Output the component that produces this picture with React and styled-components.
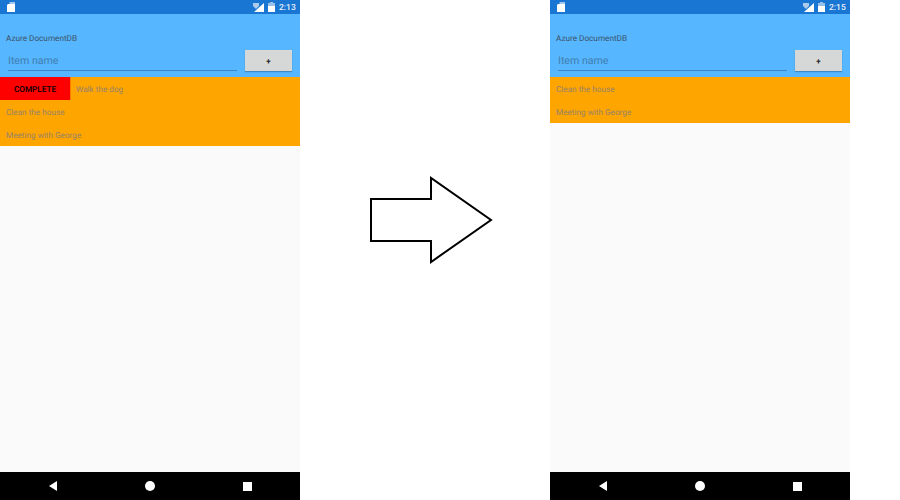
import React from 'react';
import styled, { createGlobalStyle } from 'styled-components';

const GlobalStyle = createGlobalStyle`
  html, body {
    margin: 0;
    padding: 0;
    background: #ffffff;
    font-family: Roboto, "Liberation Sans", sans-serif;
    text-rendering: geometricPrecision;
  }
`;

const Phone = ({ time, items, swiped }) => (
  <PhoneFrame>
    <StatusBar>
      <svg width="8" height="10" viewBox="0 0 8 10">
        <path d="M2.5 0H8V2H2.5Z" fill="#fff" opacity="0.6" />
        <path d="M1 2H8V10H0V3Z" fill="#fff" />
      </svg>
      <StatusRight>
        <svg width="11" height="9" viewBox="0 0 11 9">
          <path d="M11 0V9H1Z" fill="#fff" />
          <path d="M0 0H6V3L3 6L0 3Z" fill="#cfe0f3" opacity="0.8" />
        </svg>
        <svg width="7" height="10" viewBox="0 0 7 10">
          <path d="M2 0H5V1H7V10H0V1H2Z" fill="#fff" opacity="0.55" />
          <path d="M0 4H7V10H0Z" fill="#fff" />
        </svg>
        <Clock>{time}</Clock>
      </StatusRight>
    </StatusBar>
    <Header>
      <AppTitle>Azure DocumentDB</AppTitle>
      <InputRow>
        <ItemInput>Item name</ItemInput>
        <AddButton>+</AddButton>
      </InputRow>
    </Header>
    <TodoList>
      {swiped && (
        <TodoRow>
          <CompleteButton>COMPLETE</CompleteButton>
          <TodoText $afterButton>{swiped}</TodoText>
        </TodoRow>
      )}
      {items.map((item) => (
        <TodoRow key={item}>
          <TodoText>{item}</TodoText>
        </TodoRow>
      ))}
    </TodoList>
    <Body />
    <NavBar>
      <svg width="8" height="10" viewBox="0 0 8 10">
        <path d="M8 0V10L0 5Z" fill="#fff" />
      </svg>
      <HomeDot />
      <RecentSquare />
    </NavBar>
  </PhoneFrame>
);

const App = () => (
  <>
    <GlobalStyle />
    <Page>
      <Phone time="2:13" swiped="Walk the dog" items={['Clean the house', 'Meeting with George']} />
      <ArrowColumn>
        <svg width="124" height="88" viewBox="0 0 124 88">
          <path
            d="M2 23H62V2L122 44L62 86V65H2Z"
            fill="#fff"
            stroke="#000"
            strokeWidth="2"
          />
        </svg>
      </ArrowColumn>
      <Phone time="2:15" items={['Clean the house', 'Meeting with George']} />
    </Page>
  </>
);

export default App;

const Page = styled.div`
  display: flex;
  width: 900px;
  height: 500px;
  overflow: hidden;
  background: #ffffff;
`;

const PhoneFrame = styled.div`
  display: flex;
  flex-direction: column;
  width: 300px;
  height: 500px;
  flex-shrink: 0;
  background: #fafafa;
`;

const ArrowColumn = styled.div`
  display: flex;
  justify-content: center;
  width: 250px;
  flex-shrink: 0;
  padding: 176px 0 0 11px;
  box-sizing: border-box;
`;

const StatusBar = styled.div`
  display: flex;
  justify-content: space-between;
  align-items: center;
  height: 14px;
  padding: 0 5px 0 7px;
  background: #1976d2;
`;

const StatusRight = styled.div`
  display: flex;
  align-items: center;
  gap: 4px;
`;

const Clock = styled.span`
  width: 16px;
  padding-top: 1px;
  font-size: 8.5px;
  font-weight: 500;
  white-space: nowrap;
  color: #e6effa;
`;

const Header = styled.div`
  display: flex;
  flex-direction: column;
  height: 63px;
  padding: 20px 8px 0 6px;
  box-sizing: border-box;
  background: #56b6ff;
`;

const AppTitle = styled.div`
  font-size: 8.2px;
  line-height: 10px;
  color: #3c5368;
`;

const InputRow = styled.div`
  display: flex;
  justify-content: space-between;
  align-items: flex-start;
  margin-top: 6px;
`;

const ItemInput = styled.div`
  width: 229px;
  height: 20.5px;
  margin-left: 2px;
  font-size: 10.6px;
  line-height: 21px;
  color: #3f7fb0;
  border-bottom: 1.5px solid #3f86c0;
  box-sizing: border-box;
`;

const AddButton = styled.div`
  display: flex;
  justify-content: center;
  align-items: center;
  width: 47px;
  height: 21px;
  padding-top: 1px;
  box-sizing: border-box;
  font-size: 8px;
  font-weight: 700;
  color: #222;
  background: #d6d7d7;
  box-shadow: 0 1px 1px rgba(0, 0, 0, 0.25);
`;

const TodoList = styled.div`
  display: flex;
  flex-direction: column;
  background: #ffa500;
  box-shadow: 0 1px 0 #fde9c4;
`;

const TodoRow = styled.div`
  display: flex;
  align-items: center;
  height: 23px;
`;

const CompleteButton = styled.div`
  display: flex;
  justify-content: center;
  align-items: center;
  width: 71px;
  height: 23px;
  padding-top: 2px;
  font-size: 8.2px;
  font-weight: 500;
  color: #000;
  background: #ff0000;
  border-right: 1px solid #ff7a00;
  box-sizing: border-box;
`;

const TodoText = styled.span`
  margin-left: ${(props) => (props.$afterButton ? '5px' : '6px')};
  padding-top: 3px;
  font-size: 8.2px;
  color: #94836a;
`;

const Body = styled.div`
  flex: 1;
  background: #fafafa;
`;

const NavBar = styled.div`
  display: flex;
  justify-content: space-between;
  align-items: center;
  height: 28px;
  padding: 0 48px 0 49px;
  background: #000000;
`;

const HomeDot = styled.span`
  width: 10px;
  height: 10px;
  border-radius: 50%;
  background: #ffffff;
`;

const RecentSquare = styled.span`
  width: 9px;
  height: 9px;
  background: #ffffff;
`;
